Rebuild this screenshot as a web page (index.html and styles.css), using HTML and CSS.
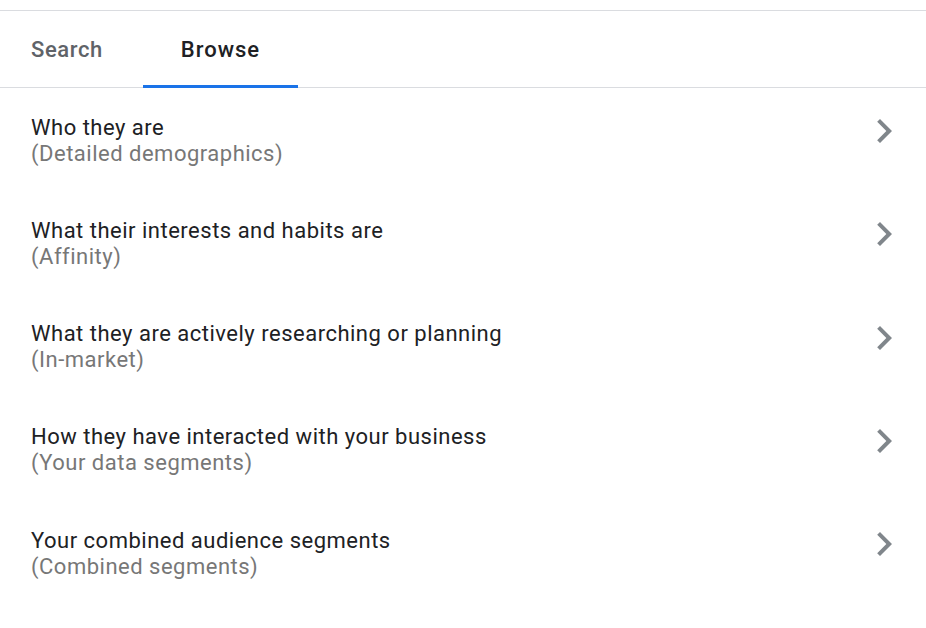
FILE: index.html
```html
<!DOCTYPE html>
<html>
<head>
<meta charset="utf-8">
<link rel="stylesheet" href="styles.css">
</head>
<body>
<div class="panel">
  <div class="tabs">
    <div class="tab tab-search">Search</div>
    <div class="tab tab-browse active">Browse</div>
  </div>
  <div class="list">
    <div class="row">
      <div class="texts">
        <div class="title">Who they are</div>
        <div class="sub">(Detailed demographics)</div>
      </div>
      <svg class="chev" viewBox="0 0 24 24"><path d="M10 6L8.59 7.41 13.17 12l-4.58 4.59L10 18l6-6z"/></svg>
    </div>
    <div class="row">
      <div class="texts">
        <div class="title">What their interests and habits are</div>
        <div class="sub">(Affinity)</div>
      </div>
      <svg class="chev" viewBox="0 0 24 24"><path d="M10 6L8.59 7.41 13.17 12l-4.58 4.59L10 18l6-6z"/></svg>
    </div>
    <div class="row">
      <div class="texts">
        <div class="title">What they are actively researching or planning</div>
        <div class="sub">(In-market)</div>
      </div>
      <svg class="chev" viewBox="0 0 24 24"><path d="M10 6L8.59 7.41 13.17 12l-4.58 4.59L10 18l6-6z"/></svg>
    </div>
    <div class="row">
      <div class="texts">
        <div class="title">How they have interacted with your business</div>
        <div class="sub">(Your data segments)</div>
      </div>
      <svg class="chev" viewBox="0 0 24 24"><path d="M10 6L8.59 7.41 13.17 12l-4.58 4.59L10 18l6-6z"/></svg>
    </div>
    <div class="row">
      <div class="texts">
        <div class="title">Your combined audience segments</div>
        <div class="sub">(Combined segments)</div>
      </div>
      <svg class="chev" viewBox="0 0 24 24"><path d="M10 6L8.59 7.41 13.17 12l-4.58 4.59L10 18l6-6z"/></svg>
    </div>
  </div>
</div>
</body>
</html>
```
FILE: styles.css
```css
html, body {
  margin: 0;
  padding: 0;
  background: #ffffff;
}
body {
  font-family: Roboto, "Liberation Sans", sans-serif;
  width: 926px;
  height: 628px;
  overflow: hidden;
}
.panel {
  margin-top: 10px;
  border-top: 1px solid #dadce0;
}
.tabs {
  display: flex;
  height: 76px;
  border-bottom: 1px solid #dadce0;
}
.tab {
  display: flex;
  align-items: center;
  font-size: 22px;
  font-weight: 500;
  letter-spacing: 0.8px;
  color: #5f6368;
  box-sizing: border-box;
  position: relative;
  padding-top: 1px;
}
.tab-search {
  width: 143px;
  padding-left: 31px;
  letter-spacing: 0.6px;
}
.tab-browse {
  width: 155px;
  justify-content: center;
  letter-spacing: 1px;
}
.tab.active {
  color: #202124;
}
.tab.active::after {
  content: "";
  position: absolute;
  left: 0;
  right: 0;
  bottom: -1px;
  height: 3px;
  background: #1a73e8;
}
.list {
  display: flex;
  flex-direction: column;
}
.row {
  display: flex;
  align-items: flex-start;
  height: 103.25px;
  box-sizing: border-box;
  padding: 26.5px 18px 0 31px;
}
.texts {
  flex: 1;
}
.title {
  font-size: 22px;
  line-height: 26px;
  color: #202124;
  letter-spacing: 0.5px;
}
.sub {
  font-size: 22px;
  line-height: 26px;
  color: #777777;
  letter-spacing: 0.5px;
}
.chev {
  width: 48px;
  height: 48px;
  fill: #80868b;
  margin-top: -7.5px;
}
```
